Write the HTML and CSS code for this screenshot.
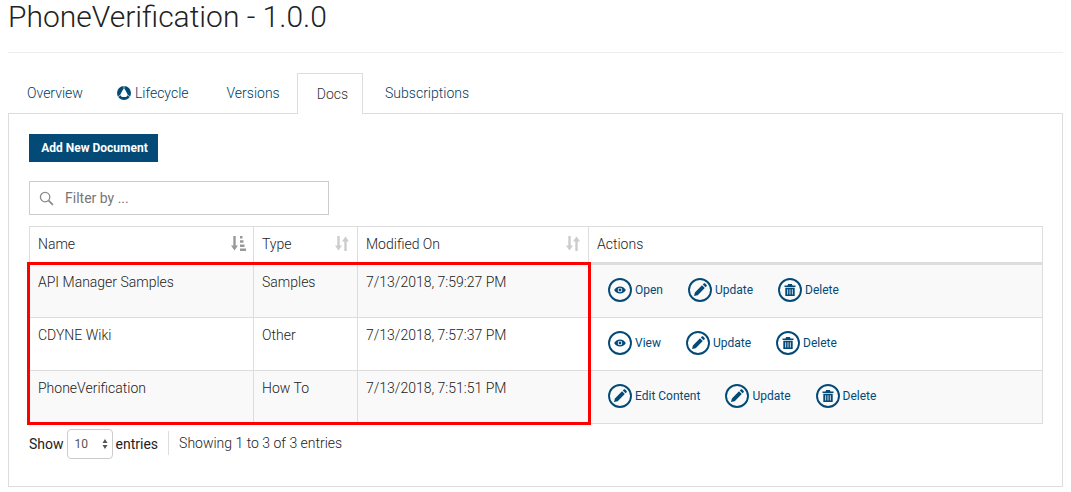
FILE: index.html
```html
<!DOCTYPE html>
<html>
<head>
  <meta charset="UTF-8">
  <title>PhoneVerification - 1.0.0</title>
  <link rel="stylesheet" href="styles.css">
</head>
<body>
  <svg class="defs" width="0" height="0">
    <symbol id="i-eye" viewBox="0 0 24 24">
      <circle cx="12" cy="12" r="11" fill="none" stroke="#034a77" stroke-width="1.900"/>
      <path fill="#034a77" fill-rule="evenodd" d="M12 8.400c-2.700 0-4.800 1.500-5.800 3.600 1 2.100 3.100 3.600 5.800 3.600s4.800-1.500 5.800-3.600c-1-2.100-3.100-3.600-5.800-3.600zM12 9.700a2.300 2.300 0 1 1 0 4.600 2.300 2.300 0 0 1 0-4.600z"/>
      <circle cx="12" cy="12" r="1.400" fill="#034a77"/>
    </symbol>
    <symbol id="i-edit" viewBox="0 0 24 24">
      <circle cx="12" cy="12" r="11" fill="none" stroke="#034a77" stroke-width="1.900"/>
      <path fill="#034a77" d="M6 18.100l.9-3.700 7.100-7.100 2.800 2.800-7.100 7.100zM14.800 6.500l1-1c.4-.4 1-.4 1.400 0l1.400 1.400c.4.4.4 1 0 1.400l-1 1z"/>
    </symbol>
    <symbol id="i-trash" viewBox="0 0 24 24">
      <circle cx="12" cy="12" r="11" fill="none" stroke="#034a77" stroke-width="1.900"/>
      <path fill="#034a77" fill-rule="evenodd" d="M6.500 7.500h3l.6-1.500h3.800l.6 1.500h3v1.400h-11zM7.300 9.800h9.400v8.200h-9.400zM9.300 11.300v5.200h.8v-5.200zM11.600 11.300v5.200h.8v-5.200zM13.900 11.300v5.200h.8v-5.200z"/>
    </symbol>
  </svg>

  <header class="page-head">
    <h1>PhoneVerification - 1.0.0</h1>
  </header>

  <ul class="tabs">
    <li>Overview</li>
    <li class="tab-life">
      <svg class="life-icon" viewBox="0 0 14 14" width="14" height="14"><path fill="#034a77" fill-rule="evenodd" d="M7 0a7 7 0 1 1 0 14 7 7 0 0 1 0-14zM7 2.900c-.5 0-.8.2-1 .6l-2.500 4.700c-.2.400-.2.800 0 1.200l.8 1.200c.2.300.5.500.9.500h3.600c.4 0 .7-.2.900-.5l.8-1.200c.2-.4.2-.8 0-1.200l-2.500-4.700c-.2-.4-.5-.6-1-.6z"/><path d="M7 3v-3M3.500 9l-2.600 1.800M10.500 9l2.600 1.800" stroke="#fff" stroke-width=".7"/></svg>
      Lifecycle
    </li>
    <li class="tab-versions">Versions</li>
    <li class="active">Docs</li>
    <li class="tab-subs">Subscriptions</li>
  </ul>

  <section class="panel">
    <button class="add-btn">Add New Document</button>

    <div class="filter">
      <svg viewBox="0 0 16 16" width="15" height="15"><circle cx="6.500" cy="6.500" r="5" fill="none" stroke="#8a8a8a" stroke-width="1.400"/><path d="M10.300 10.300l4.500 4.500" stroke="#8a8a8a" stroke-width="1.800"/></svg>
      <span>Filter by ...</span>
    </div>

    <div class="table-wrap">
      <table class="docs">
        <thead>
          <tr>
            <th class="c-name">Name
              <svg class="sort on" viewBox="0 0 16 15" width="16" height="15"><path d="M3.300 0h2.400v9.500h2.300l-3.500 5-3.500-5h2.300z"/><path d="M10 0h2.500v2.500h-2.500zM10 4.200h3.500v2.500h-3.500zM10 8.400h4.500v2.500h-4.500zM10 12.400h6v2.500h-6z"/></svg>
            </th>
            <th class="c-type">Type
              <svg class="sort" viewBox="0 0 16 15" width="16" height="15"><path d="M3.300 0h2.400v9.500h2.300l-3.500 5-3.500-5h2.300zM10.300 15h2.400v-9.500h2.300l-3.500-5-3.500 5h2.300z"/></svg>
            </th>
            <th class="c-mod">Modified On
              <svg class="sort" viewBox="0 0 16 15" width="16" height="15"><path d="M3.300 0h2.400v9.500h2.300l-3.500 5-3.500-5h2.300zM10.300 15h2.400v-9.500h2.300l-3.500-5-3.500 5h2.300z"/></svg>
            </th>
            <th>Actions</th>
          </tr>
        </thead>
        <tbody>
          <tr>
            <td>API Manager Samples</td>
            <td>Samples</td>
            <td>7/13/2018, 7:59:27 PM</td>
            <td class="actions">
              <a><svg><use href="#i-eye"/></svg>Open</a>
              <a><svg><use href="#i-edit"/></svg>Update</a>
              <a><svg><use href="#i-trash"/></svg>Delete</a>
            </td>
          </tr>
          <tr>
            <td>CDYNE Wiki</td>
            <td>Other</td>
            <td>7/13/2018, 7:57:37 PM</td>
            <td class="actions">
              <a><svg><use href="#i-eye"/></svg>View</a>
              <a><svg><use href="#i-edit"/></svg>Update</a>
              <a><svg><use href="#i-trash"/></svg>Delete</a>
            </td>
          </tr>
          <tr>
            <td>PhoneVerification</td>
            <td>How To</td>
            <td>7/13/2018, 7:51:51 PM</td>
            <td class="actions">
              <a><svg><use href="#i-edit"/></svg>Edit Content</a>
              <a><svg><use href="#i-edit"/></svg>Update</a>
              <a><svg><use href="#i-trash"/></svg>Delete</a>
            </td>
          </tr>
        </tbody>
      </table>
      <div class="highlight"></div>
    </div>

    <div class="table-foot">
      <span class="show">Show</span>
      <span class="length">10<svg viewBox="0 0 6 12" width="6" height="12"><path fill="#555" d="M3 1l2.500 4h-5zM3 11l-2.500-4h5z"/></svg></span>
      <span class="show">entries</span>
      <span class="info">Showing 1 to 3 of 3 entries</span>
    </div>
  </section>
</body>
</html>
```

FILE: styles.css
```css
body {
  margin: 0;
  padding: 0 8px;
  background-color: #fff;
  font-family: Roboto, "Liberation Sans", sans-serif;
  font-size: 14px;
  font-weight: 300;
  color: #222;
}

.defs {
  position: absolute;
}

.page-head {
  height: 52px;
  border-bottom: 1px solid #eee;
}

h1 {
  margin: 0;
  font-size: 30px;
  font-weight: 300;
  line-height: 34px;
  color: #222;
}

.tabs {
  display: flex;
  list-style: none;
  margin: 20px 0 0;
  padding: 0;
  height: 40px;
}

.tabs li {
  display: flex;
  align-items: center;
  gap: 4px;
  padding: 0 18px 0 20px;
  height: 40px;
  color: #023a60;
}

.tabs li:first-child {
  padding-left: 19px;
}

.tabs li.tab-life {
  padding-left: 16px;
}

.tabs li.tab-versions {
  padding-right: 17px;
}

.tabs li.tab-subs {
  padding-left: 22px;
}

.tabs li.active {
  height: 41px;
  padding: 0 14px 1px 19px;
  box-sizing: border-box;
  border: 1px solid #ddd;
  border-bottom: 0;
  background-color: #fff;
  color: #333;
  position: relative;
  z-index: 1;
}

.life-icon {
  flex: none;
}

.panel {
  box-sizing: border-box;
  height: 374px;
  border: 1px solid #ddd;
  padding: 20px;
}

.add-btn {
  display: block;
  width: 129px;
  height: 28px;
  border: 0;
  padding: 0 0 0 2px;
  background-color: #034a77;
  color: #fff;
  font-family: inherit;
  font-size: 12px;
  font-weight: 700;
}

.filter {
  box-sizing: border-box;
  display: flex;
  align-items: center;
  gap: 11px;
  width: 300px;
  height: 34px;
  margin-top: 19px;
  padding-left: 9px;
  border: 1px solid #ccc;
  color: #777;
  font-weight: 400;
}

.table-wrap {
  position: relative;
  margin-top: 11px;
}

.docs {
  width: 1014px;
  table-layout: fixed;
  border-collapse: collapse;
}

.docs th,
.docs td {
  border: 1px solid #ddd;
  padding: 7px 8px 6px;
  text-align: left;
  vertical-align: top;
  font-weight: 300;
  line-height: 20px;
}

.docs th {
  position: relative;
  height: 20px;
  padding-top: 7px;
  padding-bottom: 8px;
  border-bottom: 3px solid #ddd;
}

.c-name {
  width: 207px;
}

.c-type {
  width: 87px;
}

.c-mod {
  width: 214px;
}

.docs td {
  height: 39px;
}

.docs tbody tr:nth-child(odd) {
  background-color: #f9f9f9;
}

.sort {
  position: absolute;
  right: 7px;
  top: 9px;
  fill: #ccc;
}

.sort.on {
  fill: #999;
}

.docs td.actions {
  padding: 13px 0 0 19px;
  color: #034a77;
  font-size: 12px;
  font-weight: 400;
  line-height: 24px;
}

.actions a {
  display: inline-flex;
  align-items: center;
  gap: 3px;
  margin-right: 22px;
  vertical-align: top;
}

.actions svg {
  width: 24px;
  height: 24px;
}

/* red annotation box from the original screenshot */
.highlight {
  position: absolute;
  left: -2px;
  top: 36px;
  width: 558px;
  height: 157px;
  border: 3px solid #f00;
}

.table-foot {
  display: flex;
  align-items: center;
  margin-top: 5px;
  height: 30px;
}

.show {
  font-weight: 400;
}

.length {
  box-sizing: border-box;
  display: flex;
  align-items: center;
  justify-content: space-between;
  width: 46px;
  height: 30px;
  margin: 0 3px;
  padding: 0 4px 0 7px;
  border: 1px solid #ccc;
  border-radius: 4px;
  font-size: 12px;
  font-weight: 400;
  color: #555;
}

.info {
  margin-left: 10px;
  margin-bottom: 2px;
  padding-left: 10px;
  border-left: 1px solid #ddd;
  line-height: 24px;
}
```
